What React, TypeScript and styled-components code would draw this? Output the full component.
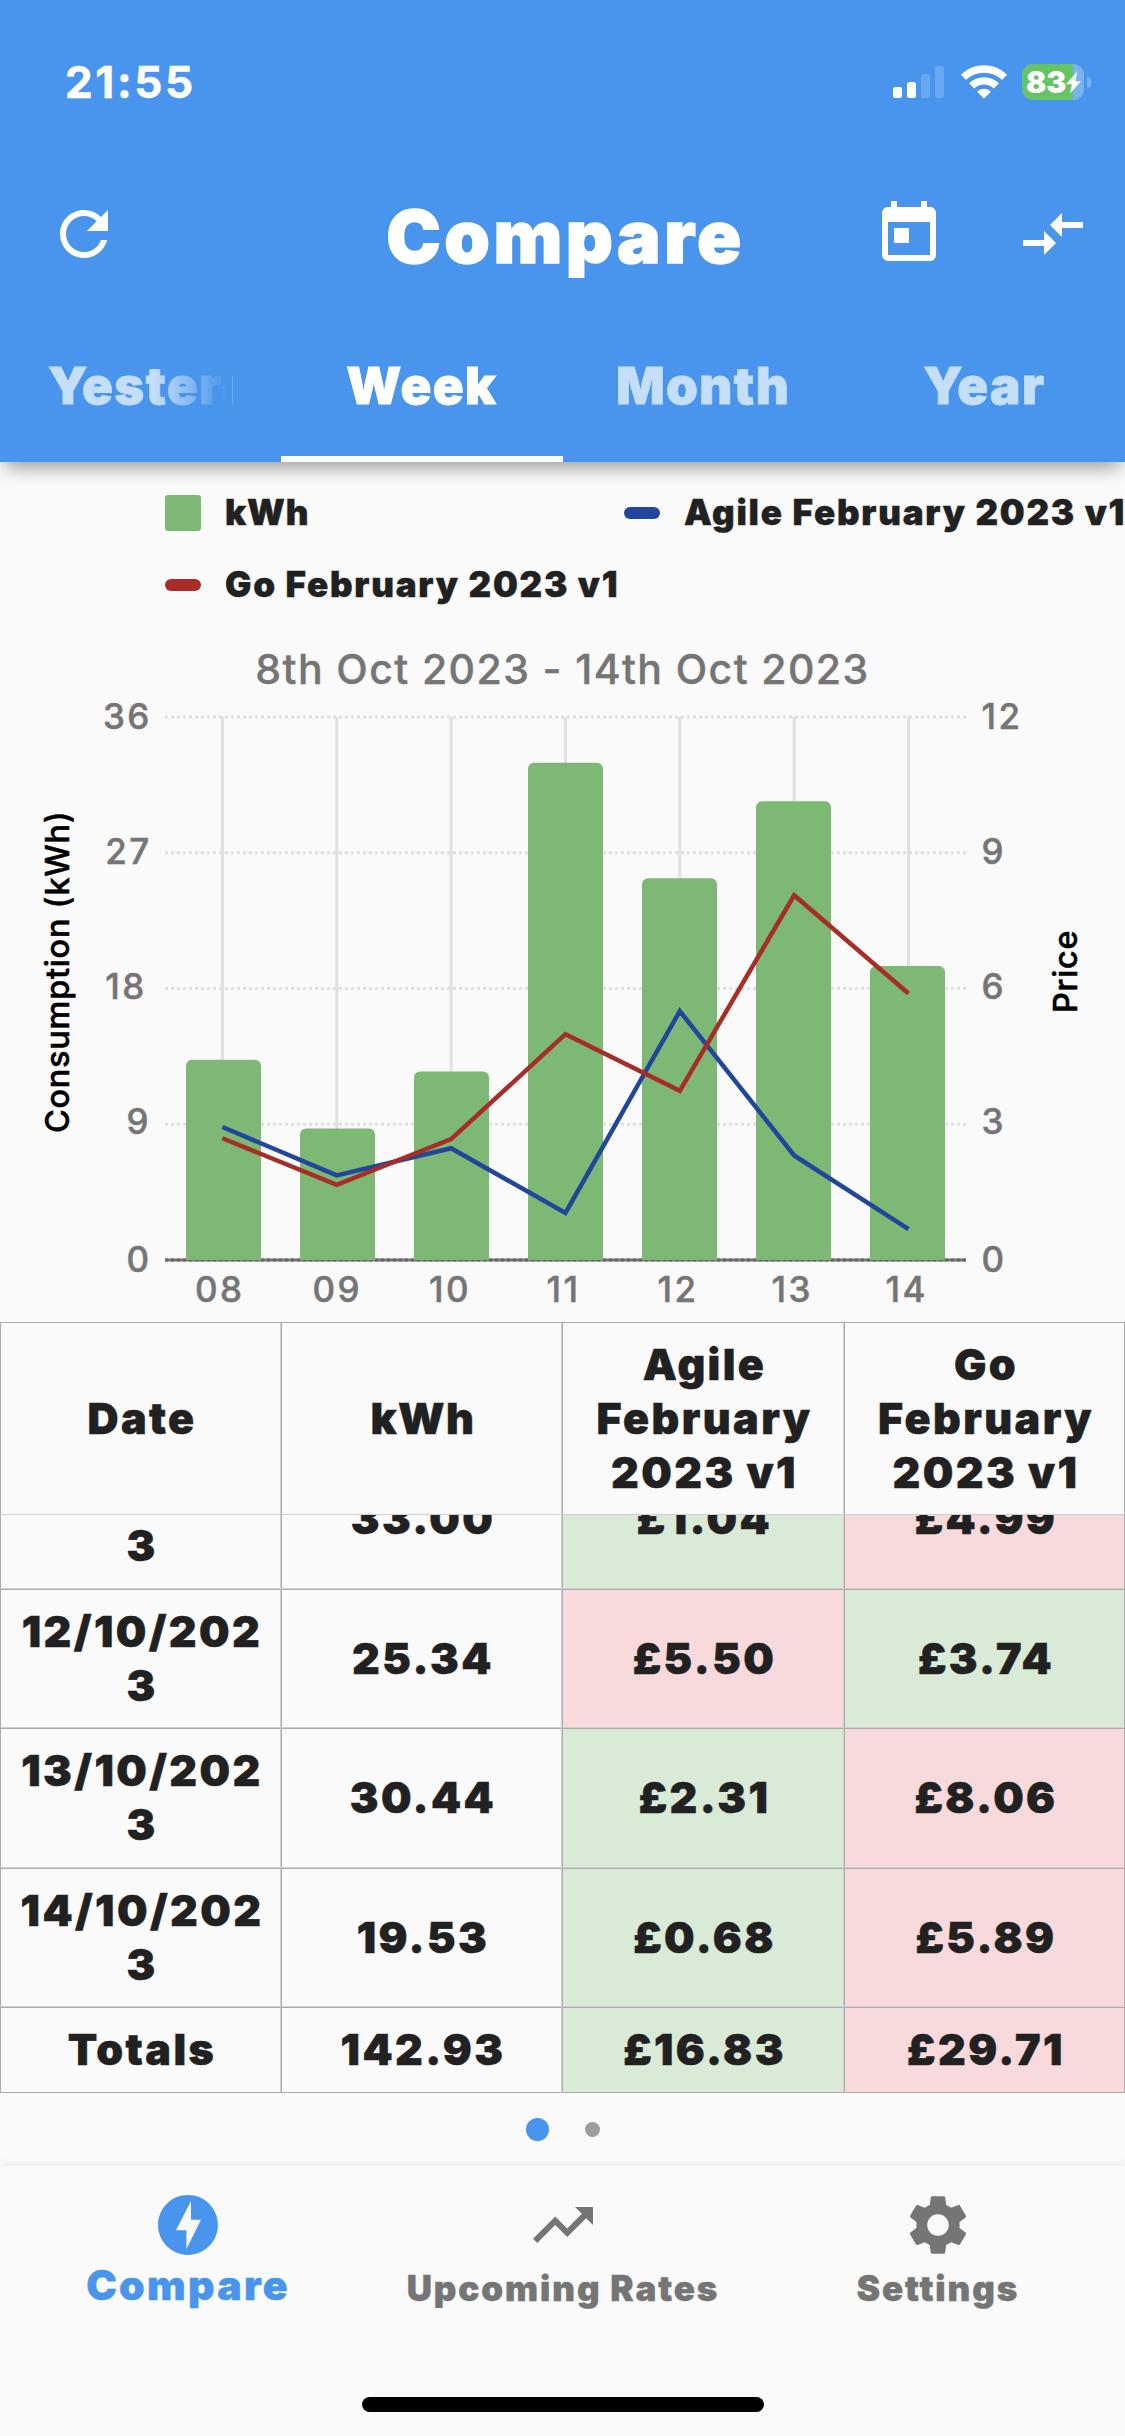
import React from 'react';
import styled, { createGlobalStyle } from 'styled-components';
import {
  MdCompareArrows,
  MdOfflineBolt,
  MdRefresh,
  MdSettings,
  MdToday,
  MdTrendingUp,
} from 'react-icons/md';

const color = {
  primary: '#4994ec',
  surface: '#fafafa',
  text: '#212121',
  muted: '#757575',
  bar: '#7db874',
  agile: '#21469b',
  go: '#a72e28',
  cheap: '#d9ead7',
  dear: '#f8dadc',
  rule: '#acacac',
  ruleSoft: '#d0d0d0',
};

const GlobalStyle = createGlobalStyle`
  * { box-sizing: border-box; }
  body {
    margin: 0;
    background: ${color.surface};
    font-family: Inter, Roboto, "Liberation Sans", sans-serif;
  }
`;

const Screen = styled.div`
  display: flex;
  flex-direction: column;
  width: 1125px;
  height: 2436px;
  overflow: hidden;
  background: ${color.surface};
  color: ${color.text};
`;

/* ---------- header ---------- */

const Header = styled.header`
  position: relative;
  z-index: 1;
  display: flex;
  flex-direction: column;
  height: 462px;
  flex: none;
  background: ${color.primary};
  color: #fff;
  box-shadow: 0 10px 18px -5px rgba(0, 0, 0, 0.4);
`;

const StatusBar = styled.div`
  display: flex;
  align-items: center;
  justify-content: space-between;
  height: 164px;
  padding: 0 34px 0 65px;
`;

const Clock = styled.span`
  font-size: 44px;
  font-weight: 700;
  letter-spacing: 2.6px;
  -webkit-text-stroke: 0.5px currentColor;
`;

const StatusIcons = styled.div`
  display: flex;
  align-items: center;
`;

const SignalIcon = styled.svg`
  width: 51px;
  height: 32px;
  margin-right: 17px;
`;

const WifiIcon = styled.svg`
  width: 46px;
  height: 34px;
  margin-right: 15px;
`;

const Battery = styled.div`
  display: flex;
  align-items: center;
  width: 62px;
  height: 36px;
  padding-left: 4px;
  border-radius: 11px;
  background: linear-gradient(90deg, #65c466 51px, #7ab3f2 51px);
  font-size: 30px;
  font-weight: 900;
  line-height: 36px;
`;

const BoltIcon = styled.svg`
  flex: none;
  width: 15px;
  height: 23px;
`;

const BatteryCap = styled.span`
  width: 4px;
  height: 11px;
  margin-left: 3px;
  border-radius: 0 5px 5px 0;
  background: #7ab3f2;
`;

const Toolbar = styled.div`
  display: grid;
  grid-template-columns: 1fr auto 1fr;
  align-items: center;
  height: 140px;
  padding: 0 42px 0 48px;
`;

const Title = styled.h1`
  margin: 0;
  padding: 5px 0 0;
  font-size: 73px;
  line-height: 90px;
  font-weight: 900;
  letter-spacing: 3.5px;
  -webkit-text-stroke: 1.4px currentColor;
`;

const ToolbarActions = styled.div`
  display: flex;
  justify-content: flex-end;
  gap: 72px;
  margin-right: -6px;
  font-size: 72px;
`;

const ToolbarIcon = styled.span`
  display: flex;
  font-size: 72px;
`;

const Tabs = styled.nav`
  display: grid;
  grid-template-columns: repeat(4, minmax(0, 1fr));
  height: 158px;
`;

const Tab = styled.div<{ $active?: boolean }>`
  display: flex;
  align-items: center;
  justify-content: center;
  padding: 5px 48px 0;
  color: ${(p) => (p.$active ? '#fff' : '#c5dffa')};
  box-shadow: ${(p) => (p.$active ? 'inset 0 -6px 0 #fff' : 'none')};
`;

const TabLabel = styled.span<{ $fade?: boolean }>`
  overflow: hidden;
  min-width: 0;
  font-size: 51px;
  line-height: 70px;
  font-weight: 900;
  letter-spacing: 1.4px;
  white-space: nowrap;
  -webkit-text-stroke: 0.8px currentColor;
  ${(p) =>
    p.$fade &&
    'mask-image: linear-gradient(90deg, #000 57%, transparent 97%, transparent 99.4%, rgba(0, 0, 0, 0.3) 99.4%);'}
`;

/* ---------- chart ---------- */

const Legend = styled.div`
  display: grid;
  grid-template-columns: 459px 1fr;
  row-gap: 36px;
  padding: 33px 0 0 165px;
`;

const LegendItem = styled.div`
  display: flex;
  align-items: center;
  gap: 24px;
  height: 36px;
`;

const LegendMark = styled.span<{ $color: string; $dash?: boolean }>`
  flex: none;
  width: 36px;
  height: ${(p) => (p.$dash ? 12 : 36)}px;
  border-radius: ${(p) => (p.$dash ? 6 : 3)}px;
  background: ${(p) => p.$color};
`;

const LegendLabel = styled.span<{ $tight?: boolean }>`
  padding-bottom: 1px;
  font-size: 35px;
  line-height: 35px;
  font-weight: 900;
  letter-spacing: ${(p) => (p.$tight ? 0.8 : 1.75)}px;
  white-space: nowrap;
  -webkit-text-stroke: 0.4px currentColor;
`;

const ChartTitle = styled.h2`
  margin: 36px 0 0;
  color: ${color.muted};
  font-size: 41px;
  line-height: 60px;
  font-weight: 500;
  letter-spacing: 1.4px;
  text-align: center;
  -webkit-text-stroke: 0.4px currentColor;
`;

const ChartSvg = styled.svg`
  display: block;
  flex: none;
  width: 1125px;
  height: 623px;
`;

const TickText = styled.text`
  fill: ${color.muted};
  stroke: ${color.muted};
  stroke-width: 0.5px;
  font-size: 35px;
  font-weight: 500;
  letter-spacing: 2.4px;
`;

const AxisText = styled.text`
  fill: #000;
  stroke: #000;
  stroke-width: 0.5px;
  font-size: 32.5px;
  font-weight: 500;
  letter-spacing: 0.7px;
`;

/* ---------- table ---------- */

const Table = styled.div`
  display: flex;
  flex-direction: column;
  flex: none;
`;

const TableRow = styled.div<{ $height: number }>`
  display: grid;
  grid-template-columns: 281px 281px 282px 281px;
  flex: none;
  height: ${(p) => p.$height}px;
`;

const TableViewport = styled.div`
  display: flex;
  flex-direction: column;
  justify-content: flex-end;
  height: 492px;
  overflow: hidden;
`;

const Cell = styled.div<{ $bg?: string; $breakAll?: boolean; $tight?: boolean; $last?: boolean }>`
  display: flex;
  align-items: center;
  justify-content: center;
  padding: 0 10px 2px 13px;
  border: 1px solid ${color.rule};
  border-right-color: ${color.ruleSoft};
  border-bottom-color: ${(p) => (p.$last ? color.rule : color.ruleSoft)};
  background: ${(p) => p.$bg ?? color.surface};
  font-size: 43px;
  line-height: 54px;
  font-weight: 900;
  letter-spacing: ${(p) => (p.$tight ? 1.5 : 2.4)}px;
  text-align: center;
  word-break: ${(p) => (p.$breakAll ? 'break-all' : 'normal')};
  -webkit-text-stroke: 0.5px currentColor;

  &:last-child {
    border-right-color: ${color.rule};
  }
`;

const Pager = styled.div`
  display: flex;
  align-items: center;
  justify-content: center;
  gap: 36px;
  flex: none;
  height: 73px;
`;

const Dot = styled.span<{ $active?: boolean }>`
  width: ${(p) => (p.$active ? 23 : 15)}px;
  height: ${(p) => (p.$active ? 23 : 15)}px;
  border-radius: 50%;
  background: ${(p) => (p.$active ? color.primary : '#9e9e9e')};
`;

/* ---------- bottom navigation ---------- */

const BottomBar = styled.footer`
  display: flex;
  flex-direction: column;
  align-items: center;
  flex: none;
  height: 270px;
  background: ${color.surface};
  box-shadow: 0 -3px 8px rgba(0, 0, 0, 0.06);
`;

const NavItems = styled.nav`
  display: grid;
  grid-template-columns: repeat(3, 1fr);
  width: 100%;
  height: 231px;
  padding-top: 23px;
`;

const NavItem = styled.div<{ $active?: boolean }>`
  display: flex;
  flex-direction: column;
  align-items: center;
  color: ${(p) => (p.$active ? color.primary : color.muted)};
`;

const NavIcon = styled.span`
  display: flex;
  font-size: 72px;
`;

const NavLabel = styled.span<{ $active?: boolean }>`
  padding: ${(p) => (p.$active ? 0 : 3)}px 0 0 1px;
  font-size: ${(p) => (p.$active ? 41 : 35)}px;
  line-height: 48px;
  font-weight: 900;
  letter-spacing: ${(p) => (p.$active ? 2.3 : 1.9)}px;
  -webkit-text-stroke: 0.4px currentColor;
`;

const HomeIndicator = styled.div`
  width: 402px;
  height: 15px;
  border-radius: 8px;
  background: #000;
`;

/* ---------- data ---------- */

const days = [
  { label: '08', labelX: 195, kwh: 13.31, agile: 2.94, go: 2.69 },
  { label: '09', labelX: 312.5, kwh: 8.75, agile: 1.87, go: 1.66 },
  { label: '10', labelX: 429, kwh: 12.53, agile: 2.47, go: 2.67 },
  { label: '11', labelX: 546.5, kwh: 33.0, agile: 1.04, go: 4.99 },
  { label: '12', labelX: 657.5, kwh: 25.34, agile: 5.5, go: 3.74 },
  { label: '13', labelX: 771.5, kwh: 30.44, agile: 2.31, go: 8.06 },
  { label: '14', labelX: 885.5, kwh: 19.53, agile: 0.68, go: 5.89 },
];

const ticks = [
  { y: 717, textY: 728.5, kwh: '36', kwhX: 103, price: '12' },
  { y: 852.75, textY: 864, kwh: '27', kwhX: 105.3, price: '9' },
  { y: 988.5, textY: 999, kwh: '18', kwhX: 105.3, price: '6' },
  { y: 1124.25, textY: 1134, kwh: '9', kwhX: 126.6, price: '3' },
];

const rows = [
  { date: '11/10/2023', kwh: '33.00', agile: '£1.04', go: '£4.99', agileWins: true, height: 140 },
  { date: '12/10/2023', kwh: '25.34', agile: '£5.50', go: '£3.74', agileWins: false, height: 139 },
  { date: '13/10/2023', kwh: '30.44', agile: '£2.31', go: '£8.06', agileWins: true, height: 140 },
  { date: '14/10/2023', kwh: '19.53', agile: '£0.68', go: '£5.89', agileWins: true, height: 139 },
];

const BASE = 1260;
const LEFT = 165;
const RIGHT = 966;
const centre = (i: number) => 222.4 + i * 114.35;
const priceY = (v: number) => BASE - (v / 12) * 543;
const barPath = (i: number, kwh: number) => {
  const x = 186 + i * 114;
  const y = BASE + 0.5 - (kwh / 36) * 543;
  return `M${x} ${BASE}V${y + 6}a6 6 0 0 1 6-6h63a6 6 0 0 1 6 6V${BASE}z`;
};
const points = (key: 'agile' | 'go') =>
  days.map((d, i) => `${centre(i)},${priceY(d[key])}`).join(' ');

function Chart() {
  return (
    <ChartSvg viewBox="0 699 1125 623">
      {ticks.map((t) => (
        <line key={t.y} x1={LEFT} x2={RIGHT} y1={t.y} y2={t.y} stroke="#e0e0e0" strokeWidth="3" strokeDasharray="3 3" />
      ))}
      {days.map((d, i) => (
        <line key={d.label} x1={centre(i)} x2={centre(i)} y1="717" y2={BASE} stroke="#e0e0e0" strokeWidth="3" />
      ))}
      <line x1={LEFT} x2={RIGHT} y1={BASE} y2={BASE} stroke="#757575" strokeWidth="3" />
      <line x1={LEFT} x2={RIGHT} y1={BASE} y2={BASE} stroke="#666" strokeWidth="3" strokeDasharray="3 3" />
      {days.map((d, i) => (
        <path key={d.label} d={barPath(i, d.kwh)} fill={color.bar} />
      ))}
      <polyline points={points('agile')} fill="none" stroke={color.agile} strokeWidth="4.5" />
      <polyline points={points('go')} fill="none" stroke={color.go} strokeWidth="4.5" />
      {ticks.map((t) => (
        <React.Fragment key={t.y}>
          <TickText x={t.kwhX} y={t.textY}>{t.kwh}</TickText>
          <TickText x="981.5" y={t.textY}>{t.price}</TickText>
        </React.Fragment>
      ))}
      <TickText x="126.6" y="1271.5">0</TickText>
      <TickText x="981.5" y="1271.5">0</TickText>
      {days.map((d) => (
        <TickText key={d.label} x={d.labelX} y="1301.5">{d.label}</TickText>
      ))}
      <AxisText transform="translate(69 1133) rotate(-90)">Consumption (kWh)</AxisText>
      <AxisText transform="translate(1077 1013) rotate(-90)">Price</AxisText>
    </ChartSvg>
  );
}

export default function App() {
  return (
    <>
      <GlobalStyle />
      <Screen>
        <Header>
          <StatusBar>
            <Clock>21:55</Clock>
            <StatusIcons>
              <SignalIcon viewBox="0 0 51 32">
                <rect x="0" y="21" width="9" height="11" rx="2.5" fill="#fff" />
                <rect x="14" y="16" width="9" height="16" rx="2.5" fill="#fff" />
                <rect x="28" y="8" width="9" height="24" rx="2.5" fill="#68a8f0" />
                <rect x="42" y="0" width="9" height="32" rx="2.5" fill="#68a8f0" />
              </SignalIcon>
              <WifiIcon viewBox="-69 -101 138 102">
                <path d="M-61.8 -64A89 89 0 0 1 61.8 -64" fill="none" stroke="#fff" strokeWidth="22" />
                <path d="M-37.2 -38.5A53.5 53.5 0 0 1 37.2 -38.5" fill="none" stroke="#fff" strokeWidth="22" />
                <path d="M0 0L-20.8 -21.6A30 30 0 0 1 20.8 -21.6Z" fill="#fff" />
              </WifiIcon>
              <Battery>
                83
                <BoltIcon viewBox="558 62 45 68">
                  <path d="M592 63L558 101H576L570 129L603 92H586Z" fill="#fff" />
                </BoltIcon>
              </Battery>
              <BatteryCap />
            </StatusIcons>
          </StatusBar>
          <Toolbar>
            <ToolbarIcon><MdRefresh /></ToolbarIcon>
            <Title>Compare</Title>
            <ToolbarActions>
              <MdToday />
              <MdCompareArrows />
            </ToolbarActions>
          </Toolbar>
          <Tabs>
            <Tab><TabLabel $fade>Yesterday</TabLabel></Tab>
            <Tab $active><TabLabel>Week</TabLabel></Tab>
            <Tab><TabLabel>Month</TabLabel></Tab>
            <Tab><TabLabel>Year</TabLabel></Tab>
          </Tabs>
        </Header>

        <Legend>
          <LegendItem>
            <LegendMark $color={color.bar} />
            <LegendLabel $tight>kWh</LegendLabel>
          </LegendItem>
          <LegendItem>
            <LegendMark $color={color.agile} $dash />
            <LegendLabel>Agile February 2023 v1</LegendLabel>
          </LegendItem>
          <LegendItem>
            <LegendMark $color={color.go} $dash />
            <LegendLabel>Go February 2023 v1</LegendLabel>
          </LegendItem>
        </Legend>
        <ChartTitle>8th Oct 2023 - 14th Oct 2023</ChartTitle>
        <Chart />

        <Table>
          <TableRow $height={193}>
            <Cell>Date</Cell>
            <Cell $tight>kWh</Cell>
            <Cell>Agile February 2023 v1</Cell>
            <Cell>Go February 2023 v1</Cell>
          </TableRow>
          <TableViewport>
            {rows.map((r) => (
              <TableRow key={r.date} $height={r.height}>
                <Cell $breakAll>{r.date}</Cell>
                <Cell>{r.kwh}</Cell>
                <Cell $bg={r.agileWins ? color.cheap : color.dear}>{r.agile}</Cell>
                <Cell $bg={r.agileWins ? color.dear : color.cheap}>{r.go}</Cell>
              </TableRow>
            ))}
          </TableViewport>
          <TableRow $height={86}>
            <Cell $last>Totals</Cell>
            <Cell $last>142.93</Cell>
            <Cell $last $bg={color.cheap}>£16.83</Cell>
            <Cell $last $bg={color.dear}>£29.71</Cell>
          </TableRow>
        </Table>
        <Pager>
          <Dot $active />
          <Dot />
        </Pager>

        <BottomBar>
          <NavItems>
            <NavItem $active>
              <NavIcon><MdOfflineBolt /></NavIcon>
              <NavLabel $active>Compare</NavLabel>
            </NavItem>
            <NavItem>
              <NavIcon><MdTrendingUp /></NavIcon>
              <NavLabel>Upcoming Rates</NavLabel>
            </NavItem>
            <NavItem>
              <NavIcon><MdSettings /></NavIcon>
              <NavLabel>Settings</NavLabel>
            </NavItem>
          </NavItems>
          <HomeIndicator />
        </BottomBar>
      </Screen>
    </>
  );
}
